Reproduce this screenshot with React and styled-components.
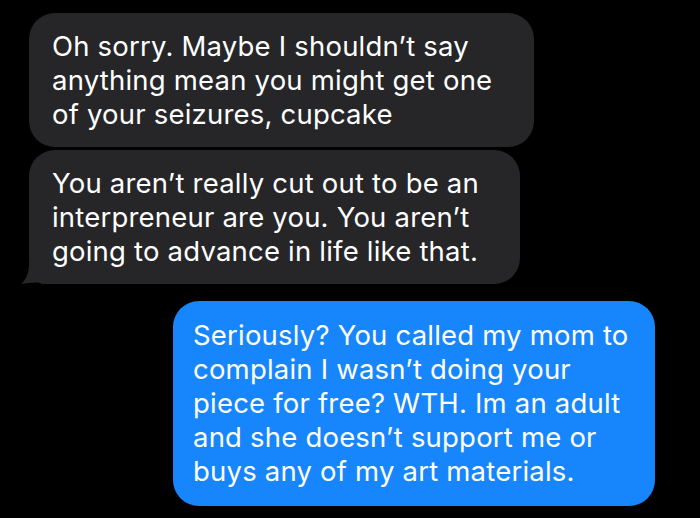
import React from 'react';
import styled, { createGlobalStyle } from 'styled-components';

const GlobalStyle = createGlobalStyle`
  html, body {
    margin: 0;
    padding: 0;
    background: #000;
  }
  body {
    font-family: Inter, "Liberation Sans", Arial, sans-serif;
    -webkit-font-smoothing: antialiased;
  }
`;

const Thread = styled.div`
  width: 700px;
  height: 518px;
  box-sizing: border-box;
  padding: 13px 45px 0 29px;
  display: flex;
  flex-direction: column;
  background: #000;
  overflow: hidden;
`;

const Bubble = styled.div`
  position: relative;
  box-sizing: border-box;
  width: ${p => p.width}px;
  margin-top: ${p => p.gap || 0}px;
  padding: ${p => p.fromMe ? '17px 20px 18px' : '16px 22px 16px 23px'};
  align-self: ${p => p.fromMe ? 'flex-end' : 'flex-start'};
  border-radius: 26px;
  background: ${p => p.fromMe ? '#1786fd' : '#262628'};
  color: #fff;
  font-size: 27.5px;
  line-height: 34px;
  letter-spacing: 0.2px;
  white-space: nowrap;
`;

const Tail = styled.svg`
  position: absolute;
  left: -9px;
  bottom: 0;
  width: 34px;
  height: 22px;
`;

const lines = text => text.map((t, i) => (
  <React.Fragment key={i}>{t}{i < text.length - 1 && <br />}</React.Fragment>
));

export default function App() {
  return (
    <>
      <GlobalStyle />
      <Thread>
        <Bubble width={505}>
          {lines([
            'Oh sorry. Maybe I shouldn’t say',
            'anything mean you might get one',
            'of your seizures, cupcake',
          ])}
        </Bubble>
        <Bubble width={491} gap={3}>
          {lines([
            'You aren’t really cut out to be an',
            'interpreneur are you. You aren’t',
            'going to advance in life like that.',
          ])}
          <Tail viewBox="0 0 34 22">
            <path d="M9 0 L34 0 L34 22 L22 22 C18 19 10 21 1 22 C7 17 9 10 9 0 Z" fill="#262628" />
          </Tail>
        </Bubble>
        <Bubble fromMe width={482} gap={17}>
          {lines([
            'Seriously? You called my mom to',
            'complain I wasn’t doing your',
            'piece for free? WTH. Im an adult',
            'and she doesn’t support me or',
            'buys any of my art materials.',
          ])}
        </Bubble>
      </Thread>
    </>
  );
}
